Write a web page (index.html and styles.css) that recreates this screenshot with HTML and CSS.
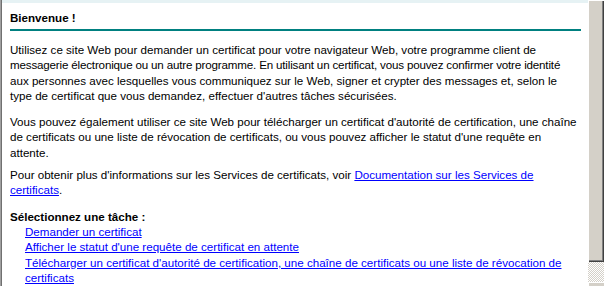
FILE: index.html
```html
<!DOCTYPE html>
<html lang="fr">
<head>
<meta charset="utf-8">
<title>Services de certificats</title>
<link rel="stylesheet" href="styles.css">
</head>
<body>
<div class="window">
  <div class="page">
    <div class="topband"></div>
    <div class="content">
      <div class="title">Bienvenue !</div>
      <div class="rule"></div>
      <p class="intro">Utilisez ce site Web pour demander un certificat pour votre navigateur Web, votre programme client de<br><span class="tight">messagerie électronique ou un autre programme. En utilisant un certificat, vous pouvez confirmer votre identité</span><br>aux personnes avec lesquelles vous communiquez sur le Web, signer et crypter des messages et, selon le<br>type de certificat que vous demandez, effectuer d'autres tâches sécurisées.</p>
      <p class="download">Vous pouvez également utiliser ce site Web pour télécharger un certificat d'autorité de certification, une chaîne<br>de certificats ou une liste de révocation de certificats, ou vous pouvez afficher le statut d'une requête en<br>attente.</p>
      <p class="more">Pour obtenir plus d'informations sur les Services de certificats, voir <a href="#">Documentation sur les Services de<br>certificats</a>.</p>
      <div class="tasks-title">Sélectionnez une tâche :</div>
      <ul class="tasks">
        <li><a href="#">Demander un certificat</a></li>
        <li><a href="#">Afficher le statut d'une requête de certificat en attente</a></li>
        <li><a href="#">Télécharger un certificat d'autorité de certification, une chaîne de certificats ou une liste de révocation de<br>certificats</a></li>
      </ul>
    </div>
  </div>
  <div class="scrollbar">
    <div class="thumb"></div>
    <div class="track"></div>
    <div class="arrow"></div>
  </div>
</div>
</body>
</html>
```

FILE: styles.css
```css
html, body {
  margin: 0;
  padding: 0;
  background: #ffffff;
}
body {
  font-family: "Liberation Sans", Arial, sans-serif;
  font-size: 11.6px;
  line-height: 15.3px;
  color: #000000;
}
.window {
  display: flex;
  width: 604px;
  height: 286px;
  overflow: hidden;
}
.page {
  flex: 1;
  border-left: 1px solid #a0a0a0;
  box-shadow: inset 1px 0 0 #707070;
  background: #ffffff;
  overflow: hidden;
}
.topband {
  height: 3px;
  margin-left: 1px;
  background: #e6f2f4;
}
.content {
  padding: 0 7px 0 9px;
}
.title {
  font-weight: bold;
  padding-top: 7px;
  line-height: 15px;
}
.rule {
  height: 2px;
  background: #008080;
  margin-top: 4px;
}
p {
  margin: 11px 0 0 0;
  white-space: nowrap;
}
p.more {
  margin-top: 7px;
}
.tight {
  letter-spacing: -0.17px;
}
.tasks-title {
  font-weight: bold;
  margin-top: 11px;
}
.tasks {
  list-style: none;
  margin: 0;
  padding: 0 0 0 15px;
  white-space: nowrap;
}
a {
  color: #0000ff;
  text-decoration: underline;
}
.scrollbar {
  width: 16px;
  display: flex;
  flex-direction: column;
  background: #d4d0c8;
}
.thumb {
  height: 262px;
  background: #d4d0c8;
  box-shadow: inset 1px 1px 0 #ffffff, inset -1px -1px 0 #404040, inset -2px -2px 0 #808080;
}
.track {
  flex: 1;
  background: repeating-conic-gradient(#d4d0c8 0 25%, #ffffff 0 50%) 0 0 / 2px 2px;
}
.arrow {
  height: 4px;
  background: #d4d0c8;
  box-shadow: inset 1px 1px 0 #ffffff;
}
```
